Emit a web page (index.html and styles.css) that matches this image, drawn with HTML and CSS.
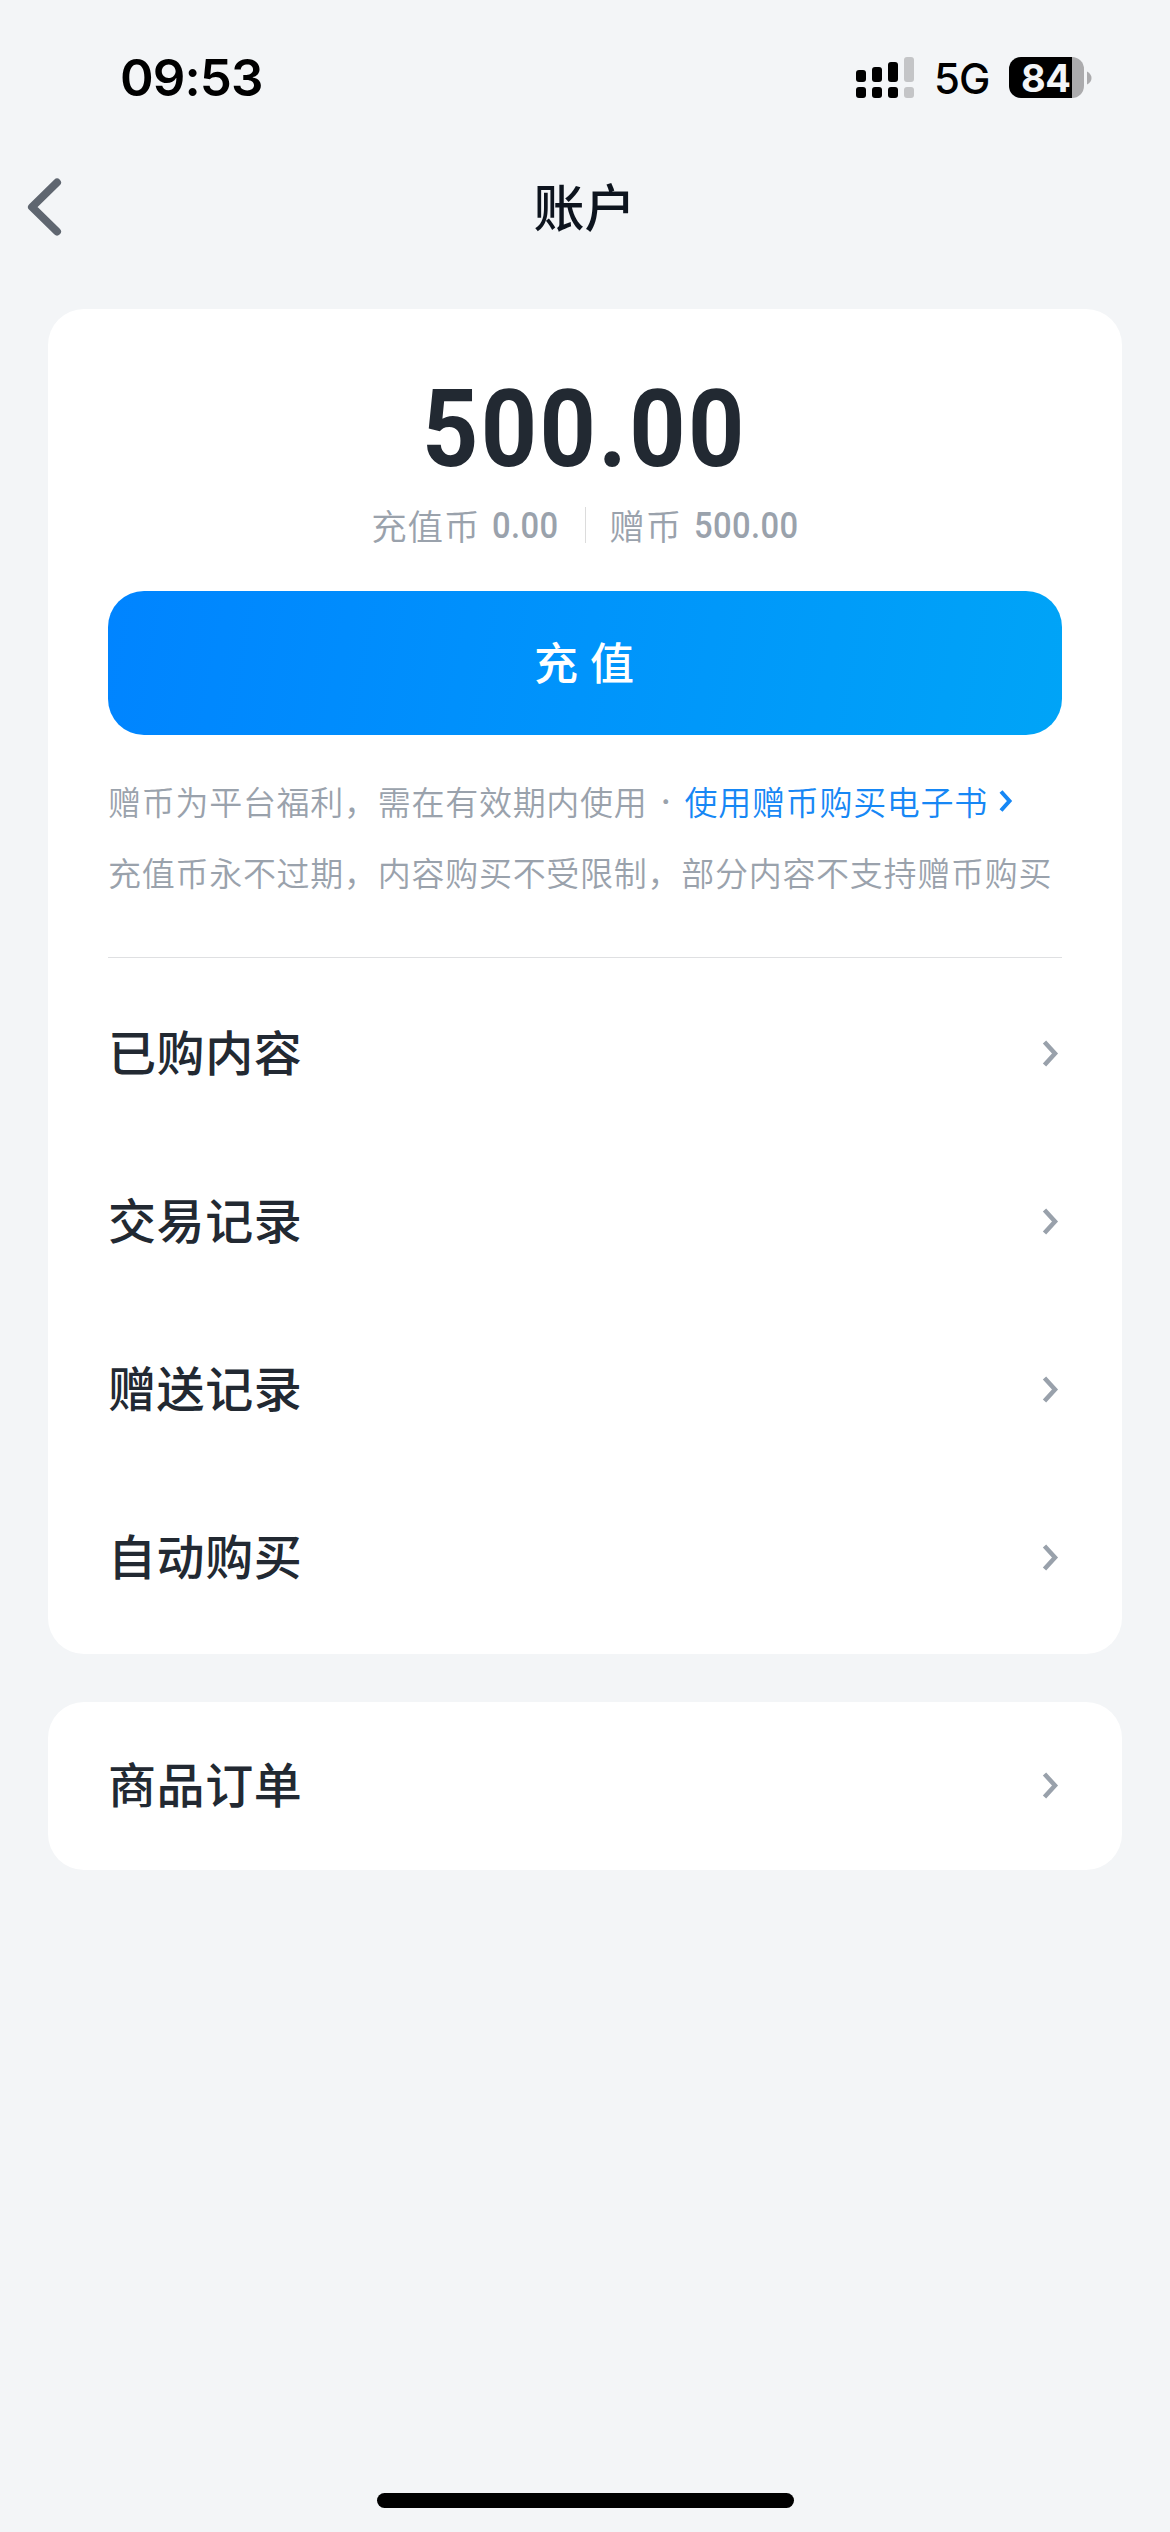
FILE: index.html
```html
<!DOCTYPE html>
<html lang="zh-CN">
<head>
<meta charset="utf-8">
<title>账户</title>
<link rel="stylesheet" href="styles.css">
</head>
<body>
<div class="screen">
  <header class="status">
    <span class="clock">09:53</span>
    <div class="indicators">
      <svg class="signal" width="58" height="41" viewBox="0 0 58 41">
        <rect x="0" y="13" width="10" height="12" rx="3"/><rect x="16" y="10" width="10" height="15" rx="3"/><rect x="32" y="5" width="10" height="20" rx="3"/>
        <rect x="0" y="30" width="10" height="11" rx="3"/><rect x="16" y="30" width="10" height="11" rx="3"/><rect x="32" y="30" width="10" height="11" rx="3"/>
        <rect class="off" x="48" y="0" width="10" height="25" rx="3"/><rect class="off" x="48" y="30" width="10" height="11" rx="3"/>
      </svg>
      <span class="network">5G</span>
      <div class="battery"><span class="level">84</span></div>
      <svg class="nub" width="5" height="14" viewBox="0 0 5 14"><path d="M0 0.5Q4.5 3 4.5 7T0 13.5Z"/></svg>
    </div>
  </header>
  <nav class="nav">
    <svg class="back" width="40" height="60" viewBox="0 0 40 60"><path d="M33 5.5L8 30L33 54.5"/></svg>
    <h1 class="title">账户</h1>
  </nav>
  <main class="content">
    <section class="card wallet">
      <div class="total"><span class="total-value">500.00</span></div>
      <div class="balances">
        <span class="coin">充值币</span><span class="amount amount-paid">0.00</span>
        <i class="separator"></i>
        <span class="coin">赠币</span><span class="amount amount-gift">500.00</span>
      </div>
      <button class="recharge">充值</button>
      <p class="note">赠币为平台福利，需在有效期内使用<span class="dot">·</span><a class="link">使用赠币购买电子书<svg class="link-arrow" width="16" height="24" viewBox="0 0 16 24"><path d="M3 2.5L11.5 12L3 21.5"/></svg></a></p>
      <p class="note">充值币永不过期，内容购买不受限制，部分内容不支持赠币购买</p>
      <hr class="divider">
      <ul class="menu">
        <li class="row"><span class="label">已购内容</span><svg class="arrow" width="20" height="30" viewBox="0 0 20 30"><path d="M3.5 3L14 14.5L3.5 26"/></svg></li>
        <li class="row"><span class="label">交易记录</span><svg class="arrow" width="20" height="30" viewBox="0 0 20 30"><path d="M3.5 3L14 14.5L3.5 26"/></svg></li>
        <li class="row"><span class="label">赠送记录</span><svg class="arrow" width="20" height="30" viewBox="0 0 20 30"><path d="M3.5 3L14 14.5L3.5 26"/></svg></li>
        <li class="row"><span class="label">自动购买</span><svg class="arrow" width="20" height="30" viewBox="0 0 20 30"><path d="M3.5 3L14 14.5L3.5 26"/></svg></li>
      </ul>
    </section>
    <section class="card">
      <ul class="menu">
        <li class="row"><span class="label">商品订单</span><svg class="arrow" width="20" height="30" viewBox="0 0 20 30"><path d="M3.5 3L14 14.5L3.5 26"/></svg></li>
      </ul>
    </section>
  </main>
  <div class="home-bar"></div>
</div>
</body>
</html>
```
FILE: styles.css
```css
* { box-sizing: border-box; margin: 0; padding: 0; }
body {
  background: #f3f5f7;
  font-family: "Noto Sans CJK SC", sans-serif;
  color: #222932;
}
.screen { width: 1170px; height: 2532px; display: flex; flex-direction: column; overflow: hidden; }

.status {
  height: 147px;
  padding: 8px 78px 0 120px;
  display: flex;
  justify-content: space-between;
  align-items: center;
  font-family: Inter, sans-serif;
  color: #000;
}
.clock { font-size: 51px; font-weight: 600; letter-spacing: -0.9px; }
.indicators { display: flex; align-items: center; }
.signal { display: block; }
.off { fill: #c4c5c7; }
.network { margin: 2px 21px 0 20px; width: 54px; font-size: 42px; font-weight: 500; letter-spacing: -1px; }
.battery {
  width: 75px;
  height: 41px;
  border-radius: 12px;
  background: linear-gradient(to right, #000 63px, #ababad 63px);
  display: flex;
  align-items: center;
  padding-left: 12px;
}
.level { padding-top: 1px; color: #f3f5f7; font-size: 38px; line-height: 41px; font-weight: 700; letter-spacing: -0.5px; }
.nub { margin-left: 3px; fill: #ababad; }

.nav { height: 120px; padding: 0 24px; display: flex; align-items: center; }
.back { fill: none; stroke: #5f6670; stroke-width: 8; stroke-linecap: round; stroke-linejoin: round; }
.title { flex: 1; margin-right: 41px; padding-bottom: 5px; text-align: center; font-size: 51px; font-weight: 500; color: #0d141e; }

.content { flex: 1; padding: 42px 48px 0; display: flex; flex-direction: column; gap: 48px; }
.card { background: #fff; border-radius: 36px; padding: 0 60px; }
.wallet { height: 1345px; padding-top: 60px; }
.total { height: 120px; text-align: center; font: 700 108px/120px Roboto, sans-serif; }
.total-value { display: inline-block; transform: scaleX(0.91); letter-spacing: 2.6px; margin-right: 1px; }
.balances {
  height: 72px;
  display: flex;
  justify-content: center;
  align-items: center;
  font-size: 35.5px;
  font-weight: 350;
  color: #9aa2ac;
}
.coin { padding-bottom: 2px; letter-spacing: 0.9px; }
.amount { padding-top: 2px; font: 500 36px/50px Roboto, sans-serif; letter-spacing: 0.4px; transform: scaleX(0.91); transform-origin: left; }
.amount-paid { margin-left: 12px; }
.amount-gift { margin-left: 12px; margin-right: -10px; }
.separator { width: 1px; height: 36px; margin: 0 23px 0 20px; background: #dcdcdc; }
.recharge {
  display: block;
  width: 100%;
  height: 144px;
  margin: 30px 0 31px;
  padding-bottom: 4px;
  border: 0;
  border-radius: 36px;
  background: linear-gradient(100deg, #0084ff, #00a4f7);
  color: #fff;
  font: 500 44px/140px "Noto Sans CJK SC", sans-serif;
  letter-spacing: 12px;
  text-indent: 10px;
}
.note { height: 71px; padding-bottom: 2px; display: flex; align-items: center; font-size: 33px; letter-spacing: 0.72px; font-weight: 350; color: #9aa2ac; white-space: nowrap; }
.dot { width: 37px; text-align: center; font-weight: 500; font-family: Inter, sans-serif; }
.link { display: flex; align-items: center; color: #1687f5; }
.link-arrow { margin-left: 10px; fill: none; stroke: #1687f5; stroke-width: 4; }
.divider { height: 1px; border: 0; margin: 49px 0 12px; background: #dfe0e2; }
.menu { list-style: none; }
.row { height: 168px; display: flex; justify-content: space-between; align-items: center; }
.label { padding-bottom: 9px; font-size: 48px; font-weight: 500; letter-spacing: 0.6px; }
.arrow { margin-right: 1px; fill: none; stroke: #99a1ab; stroke-width: 4.5; }
.home-bar { width: 417px; height: 15px; margin: 0 auto 24px; border-radius: 8px; background: #000; }
```
